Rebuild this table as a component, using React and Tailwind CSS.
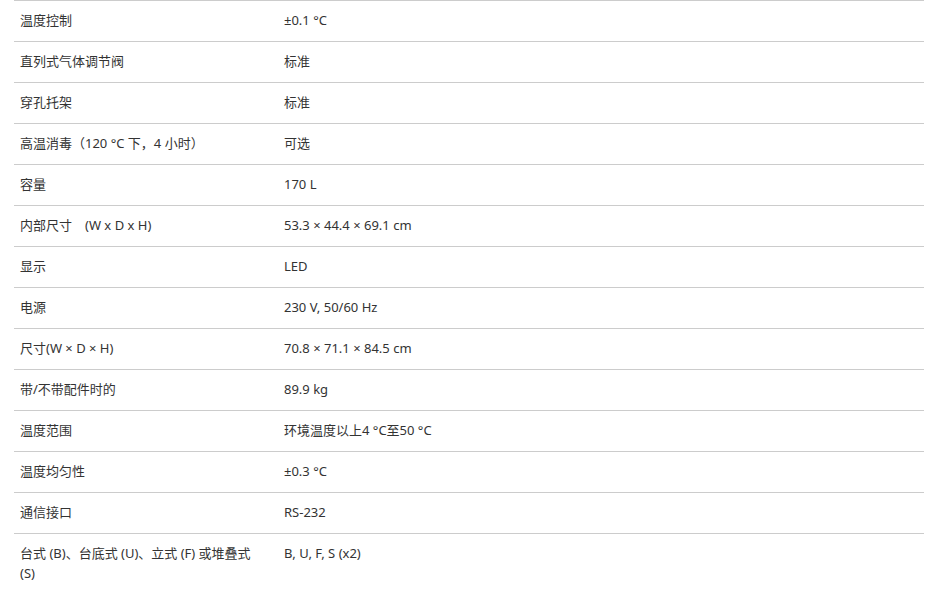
export default function App() {
  const rows = [
    ["温度控制", "±0.1 °C"],
    ["直列式气体调节阀", "标准"],
    ["穿孔托架", "标准"],
    ["高温消毒（120 °C 下，4 小时）", "可选"],
    ["容量", "170 L"],
    ["内部尺寸　(W x D x H)", "53.3 × 44.4 × 69.1 cm"],
    ["显示", "LED"],
    ["电源", "230 V, 50/60 Hz"],
    ["尺寸(W × D × H)", "70.8 × 71.1 × 84.5 cm"],
    ["带/不带配件时的", "89.9 kg"],
    ["温度范围", "环境温度以上4 °C至50 °C"],
    ["温度均匀性", "±0.3 °C"],
    ["通信接口", "RS-232"],
    ["台式 (B)、台底式 (U)、立式 (F) 或堆叠式 (S)", "B, U, F, S (x2)"],
  ];
  return (
    <div className="min-h-[609px] bg-white">
      <div
        className="ml-[14px] w-[910px] text-[13px] leading-[20px] text-[#333]"
        style={{ fontFamily: '"Noto Sans", "Noto Sans CJK SC", sans-serif' }}
      >
        {rows.map(([k, v], i) => (
          <div key={i} className="grid grid-cols-[264px_1fr] border-t border-[#cccccc]">
            <div className="pl-[6px] pr-[20px] pt-[9px] pb-[11px]">{k}</div>
            <div className="px-[6px] pt-[9px] pb-[11px]">{v}</div>
          </div>
        ))}
      </div>
    </div>
  );
}
